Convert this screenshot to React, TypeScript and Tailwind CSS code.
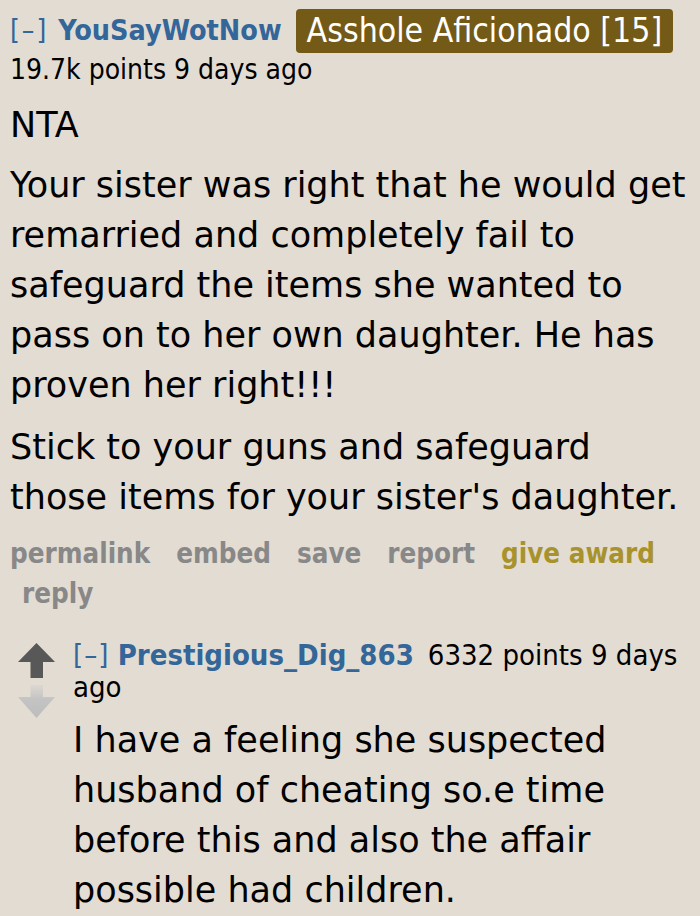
import React from "react";

const wide = { fontFamily: '"DejaVu Sans", Verdana, sans-serif' };
const cond = { fontFamily: '"DejaVu Sans Condensed", "DejaVu Sans", sans-serif', fontStretch: "condensed" as const };

export default function App() {
  return (
    <div className="w-[700px] h-[916px] overflow-hidden bg-[#e3dcd3] text-black">
      <div className="pl-[10px] pt-[9px]">
        <div className="flex items-center h-[44px]" style={cond}>
          <span className="text-[28px] tracking-[2px] text-[#369]">[–]</span>
          <span className="ml-[10px] text-[28.5px] font-bold text-[#369]">YouSayWotNow</span>
          <span className="ml-[14px] h-[44px] px-[11px] flex items-center rounded-[4px] bg-[#735a17] text-white text-[33.5px]">
            Asshole Aficionado [15]
          </span>
        </div>
        <div className="text-[28px] leading-[34px]" style={cond}>19.7k points 9 days ago</div>
        <div className="text-[35px] w-[686px]" style={wide}>
          <p className="leading-[50px] mt-[13px]">NTA</p>
          <p className="leading-[50px] mt-[10px]">
            Your sister was right that he would get remarried and completely fail to safeguard the items she wanted to pass on to her own daughter. He has proven her right!!!
          </p>
          <p className="leading-[50px] mt-[12px]">
            Stick to your guns and safeguard those items for your sister's daughter.
          </p>
        </div>
        <div className="mt-[11px] text-[27.5px] font-bold text-[#888] leading-[40px] flex flex-wrap w-[680px]" style={cond}>
          <span className="mr-[26px]">permalink</span>
          <span className="mr-[26px]">embed</span>
          <span className="mr-[26px]">save</span>
          <span className="mr-[26px]">report</span>
          <span className="text-[#a8922c]">give award</span>
          <span className="ml-[12px] w-full">reply</span>
        </div>
        <div className="flex mt-[26px]">
          <div className="w-[63px] pl-[8px] pt-[4px]">
            <svg width="37" height="76" viewBox="0 0 37 76">
              <defs>
                <linearGradient id="dg" x1="0" y1="0" x2="0" y2="1">
                  <stop offset="0" stopColor="#dcd7d0" />
                  <stop offset="0.45" stopColor="#c3c3c3" />
                  <stop offset="1" stopColor="#bdbdbd" />
                </linearGradient>
              </defs>
              <path d="M18.5 0 L37 19 L25 19 L25 35 L12.5 35 L12.5 19 L0 19 Z" fill="#585858" />
              <path d="M12.5 42 L25 42 L25 54 L37 54 L18.5 75 L0 54 L12.5 54 Z" fill="url(#dg)" />
            </svg>
          </div>
          <div className="w-[620px]">
            <div className="text-[29px] leading-[32px]" style={cond}>
              <span className="text-[#369] tracking-[1px]">[–]</span>{" "}
              <span className="font-bold text-[#369]">Prestigious_Dig_863</span>
              <span className="ml-[14px]">6332</span> <span>points</span> <span>9</span>{" "}
              <span>days</span> <span>ago</span>
            </div>
            <p className="mt-[12px] text-[35px] leading-[50px]" style={wide}>
              I have a feeling she suspected husband of cheating so.e time before this and also the affair possible had children.
            </p>
          </div>
        </div>
      </div>
    </div>
  );
}
